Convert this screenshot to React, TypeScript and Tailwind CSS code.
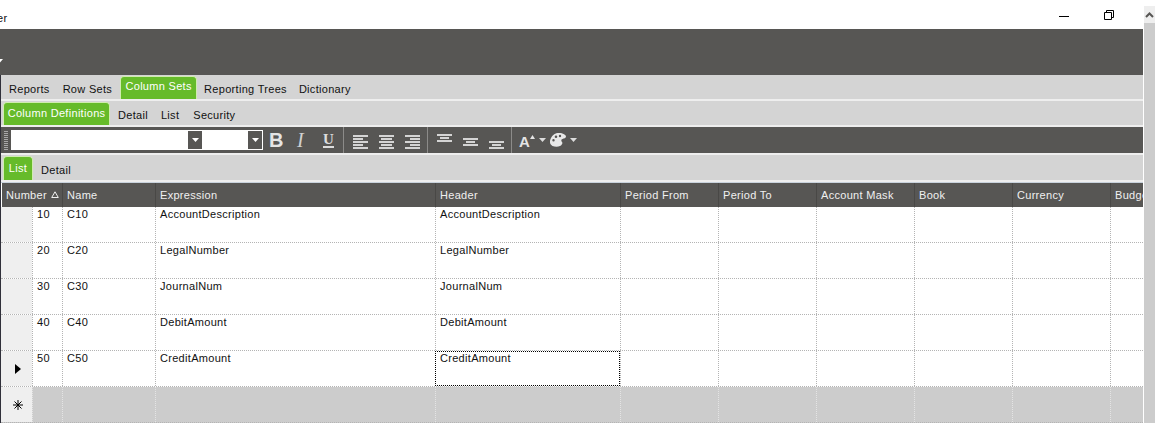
import React from "react";

const columns = [
  { label: "Number", width: "w-[30px]" },
  { label: "Name", width: "w-[93px]" },
  { label: "Expression", width: "w-[280px]" },
  { label: "Header", width: "w-[185px]" },
  { label: "Period From", width: "w-[98px]" },
  { label: "Period To", width: "w-[98px]" },
  { label: "Account Mask", width: "w-[98px]" },
  { label: "Book", width: "w-[98px]" },
  { label: "Currency", width: "w-[98px]" },
  { label: "Budget", width: "w-[33px]" },
];

const rows = [
  ["10", "C10", "AccountDescription", "AccountDescription"],
  ["20", "C20", "LegalNumber", "LegalNumber"],
  ["30", "C30", "JournalNum", "JournalNum"],
  ["40", "C40", "DebitAmount", "DebitAmount"],
  ["50", "C50", "CreditAmount", "CreditAmount"],
];

const GreenTab = ({ label, className }: { label: string; className: string }) => (
  <div
    className={`flex shrink-0 justify-center whitespace-nowrap rounded-t-[4px] border border-b-0 border-[#d0ecb0] bg-[#66bb2a] text-white ${className}`}
  >
    {label}
  </div>
);

// lines are [x, y, width] inside an 18px tall box
const AlignLines = ({ lines, className }: { lines: number[][]; className?: string }) => (
  <svg width="15" height="18" viewBox="0 0 15 18" fill="#d4d4d4" className={`shrink-0 ${className ?? ""}`}>
    {lines.map(([x, y, w], i) => (
      <rect key={i} x={x} y={y} width={w} height="2" />
    ))}
  </svg>
);

const Caret = ({ color = "#ffffff" }: { color?: string }) => (
  <svg width="7" height="4" viewBox="0 0 7 4" className="shrink-0">
    <path d="M0 0h7L3.5 4z" fill={color} />
  </svg>
);

const Divider = ({ className }: { className: string }) => (
  <div className={`h-[26px] w-px shrink-0 bg-[#8c8b89] ${className}`} />
);

export default function App() {
  return (
    <div className="relative h-[423px] w-[1155px] overflow-hidden bg-white text-[11px] leading-[13px] tracking-[0.3px] text-[#111111] [font-family:'Liberation_Sans',Arial,sans-serif]">
      <div className="h-[29px] bg-white pt-[12px]">
        <span className="ml-[-3px] block">er</span>
      </div>

      <div className="absolute right-[41px] top-0 flex h-[29px] items-center gap-[35px]">
        <svg width="10" height="10" viewBox="0 0 10 10">
          <path d="M0 6.5h10" stroke="#000" strokeWidth="1" />
        </svg>
        <svg width="10" height="10" viewBox="0 0 10 10" fill="none" stroke="#000">
          <path d="M.5 2.5h7v7h-7z" />
          <path d="M2.5 2.5v-2h7v7h-2" />
        </svg>
      </div>

      <div className="mr-[12px] flex h-[46px] items-end bg-[#575654] pb-[12px] pl-0">
        <div className="ml-[-4px]">
          <Caret />
        </div>
      </div>

      <div className="mr-[12px] border-l border-[#30303a]">
        {/* Main tabs */}
        <div className="flex h-[24px] items-end bg-[#d4d4d4] pl-[8px]">
          <div className="flex h-[24px] items-center gap-[13px] pt-[4px]">
            <span>Reports</span>
            <span>Row Sets</span>
          </div>
          <GreenTab label="Column Sets" className="ml-[8px] h-[23px] w-[77px] pt-[3px]" />
          <div className="ml-[7px] flex h-[24px] items-center gap-[12px] pt-[4px]">
            <span>Reporting Trees</span>
            <span>Dictionary</span>
          </div>
        </div>
        <div className="h-[2px] bg-[#eeeeee]" />

        {/* Sub tabs */}
        <div className="flex h-[24px] items-end bg-[#d4d4d4] pl-[2px]">
          <GreenTab label="Column Definitions" className="h-[23px] w-[107px] pt-[4px]" />
          <div className="ml-[8px] flex h-[24px] items-center gap-[13px] pt-[4px]">
            <span>Detail</span>
            <span>List</span>
            <span className="ml-px">Security</span>
          </div>
        </div>
        <div className="h-[2px] bg-[#eeeeee]" />

        {/* Format toolbar */}
        <div className="flex h-[26px] items-center bg-[#575654]">
          <div className="ml-[3px] mr-[3px] h-[19px] w-[4px] shrink-0 [background-image:repeating-linear-gradient(#a8a8a8_0_1px,transparent_1px_2px)]" />
          <div className="flex h-[20px] w-[252px] shrink-0 border border-white bg-white">
            <div className="ml-[176px] flex h-full w-[14px] items-center justify-center bg-[#575654]">
              <Caret />
            </div>
            <div className="ml-[46px] flex h-full w-[14px] items-center justify-center bg-[#575654]">
              <Caret />
            </div>
          </div>
          <span className="ml-[6px] w-[13px] shrink-0 text-[20px] font-bold leading-[20px] tracking-normal text-[#e4e4e4]">B</span>
          <span className="ml-[15px] w-[9px] shrink-0 text-[20px] italic leading-[20px] tracking-normal text-[#d0d0d0] [font-family:'Liberation_Serif',serif]">I</span>
          <span className="ml-[17px] w-[11px] shrink-0 border-b-2 border-[#dcdcdc] pb-px text-center text-[15px] font-bold leading-[12px] tracking-normal text-[#dcdcdc] [font-family:'Liberation_Serif',serif]">U</span>
          <Divider className="ml-[9px]" />
          <AlignLines className="ml-[9px]" lines={[[0, 4, 15], [0, 7, 10], [0, 10, 15], [0, 13, 10], [0, 16, 15]]} />
          <AlignLines className="ml-[11px]" lines={[[0, 4, 15], [2, 7, 11], [0, 10, 15], [2, 13, 11], [0, 16, 15]]} />
          <AlignLines className="ml-[11px]" lines={[[0, 4, 15], [5, 7, 10], [0, 10, 15], [5, 13, 10], [0, 16, 15]]} />
          <Divider className="ml-[7px]" />
          <AlignLines className="ml-[9px]" lines={[[0, 3, 15], [3, 6, 9], [0, 9, 15]]} />
          <AlignLines className="ml-[11px]" lines={[[0, 7, 15], [3, 10, 9], [0, 13, 15]]} />
          <AlignLines className="ml-[11px]" lines={[[0, 10, 15], [3, 13, 9], [0, 16, 15]]} />
          <Divider className="ml-[7px]" />
          <span className="ml-[7px] w-[11px] shrink-0 pt-[3px] text-[15px] font-bold leading-[16px] tracking-normal text-[#e4e4e4]">A</span>
          <svg width="5" height="4" viewBox="0 0 5 4" className="mb-[6px] shrink-0">
            <path d="M0 4L2.5 0 5 4z" fill="#e4e4e4" />
          </svg>
          <div className="ml-[4px]">
            <Caret color="#dcdcdc" />
          </div>
          <svg width="16" height="14" viewBox="0 0 16 14" className="ml-[4px] shrink-0">
            <path
              fillRule="evenodd"
              fill="#e8e8e8"
              d="M9 0c4 0 7 2 7 3.500S14 5.500 12.500 6 11 8 12 9s0 3-2 4-5 1-7.500 0S-1 8.500 1 5 5 0 9 0zM6 2.500a1.300 1.300 0 100 2.600 1.300 1.300 0 000-2.600zM10 1.800a1.200 1.200 0 100 2.400 1.200 1.200 0 000-2.400zM3.500 6a1.200 1.200 0 100 2.400 1.200 1.200 0 000-2.400z"
            />
          </svg>
          <div className="ml-[4px]">
            <Caret color="#dcdcdc" />
          </div>
        </div>
        <div className="h-[2px] bg-[#eeeeee]" />

        {/* List / Detail tabs */}
        <div className="flex h-[25px] items-end bg-[#d4d4d4] pl-[2px]">
          <GreenTab label="List" className="h-[24px] w-[30px] pt-[5px]" />
          <span className="ml-[8px] pb-[3px]">Detail</span>
        </div>
        <div className="h-[3px] bg-[linear-gradient(#eeeeee_0_2px,#c8d2dc_2px)]" />

        {/* Grid header */}
        <div className="ml-px flex h-[24px] bg-[#575654] text-[#f0f0f0]">
          <div className="flex w-[60px] shrink-0 items-start gap-[4px] whitespace-nowrap pl-[4px] pt-[6px]">
            {columns[0].label}
            <svg width="8" height="7" viewBox="0 0 8 7" className="mt-[2px] shrink-0">
              <path d="M4 .8L7.300 6.500H.7z" fill="none" stroke="#f0f0f0" />
            </svg>
          </div>
          {columns.slice(1).map((col) => (
            <div
              key={col.label}
              className={`${col.width} shrink-0 overflow-hidden whitespace-nowrap border-l border-[#494846] pl-[4px] pt-[6px]`}
            >
              {col.label}
            </div>
          ))}
        </div>

        {/* Grid rows */}
        {rows.map((row, r) => (
          <div key={row[0]} className="flex h-[36px] border-b border-dotted border-[#b4b4b4]">
            <div className="flex w-[31px] shrink-0 items-center justify-center bg-[#efefef] pl-[3px]">
              {r === 4 && (
                <svg width="6" height="10" viewBox="0 0 6 10">
                  <path d="M0 0l6 5-6 5z" fill="#000" />
                </svg>
              )}
            </div>
            {columns.map((col, c) => (
              <div
                key={col.label}
                className={`${col.width} shrink-0 overflow-hidden whitespace-nowrap pl-[4px] ${
                  c === 3 && r === 4
                    ? "border border-dotted border-black"
                    : "border-l border-dotted border-[#b4b4b4] pt-px"
                }`}
              >
                {row[c] ?? ""}
              </div>
            ))}
          </div>
        ))}

        {/* New row */}
        <div className="flex h-[36px] border-b border-dotted border-[#b4b4b4] bg-[#cccccc]">
          <div className="flex w-[31px] shrink-0 items-center justify-center bg-[#efefef] pl-[3px]">
            <svg width="10" height="10" viewBox="0 0 10 10" stroke="#000" strokeWidth="1">
              <path d="M5 0v10M0 5h10M1.500 1.500l7 7M8.500 1.500l-7 7" />
            </svg>
          </div>
          {columns.map((col) => (
            <div key={col.label} className={`${col.width} shrink-0 border-l border-dotted border-[#e4e4e4]`} />
          ))}
        </div>
      </div>

      <div className="absolute bottom-0 right-0 top-[6px] flex w-[11px] flex-col bg-[#cccccc]">
        <div className="flex h-[17px] items-center justify-center bg-[#eeeeee]">
          <svg width="9" height="6" viewBox="0 0 9 6" fill="none" stroke="#575654" strokeWidth="2">
            <path d="M1 5l3.500-3.500L8 5" />
          </svg>
        </div>
      </div>
    </div>
  );
}
